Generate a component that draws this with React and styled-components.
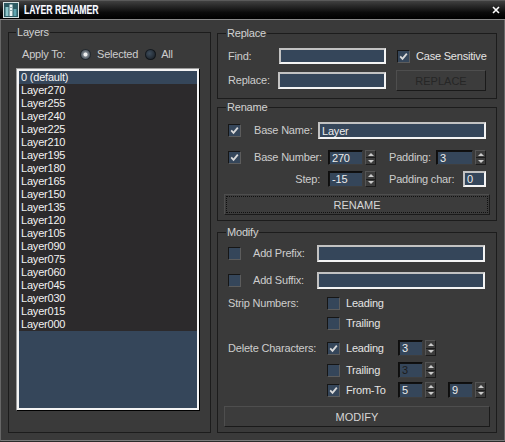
import React from "react"
import styled, { createGlobalStyle } from "styled-components"

const GlobalStyle = createGlobalStyle`
  html, body {
    margin: 0;
    padding: 0;
    background: #2b2b2b;
  }
  body {
    font-family: "Liberation Sans", Arial, sans-serif;
    font-size: 11px;
  }
`

const layers = [
  "0 (default)", "Layer270", "Layer255", "Layer240", "Layer225", "Layer210",
  "Layer195", "Layer180", "Layer165", "Layer150", "Layer135", "Layer120",
  "Layer105", "Layer090", "Layer075", "Layer060", "Layer045", "Layer030",
  "Layer015", "Layer000",
]

const Window = styled.div`
  width: 505px;
  height: 441px;
  display: flex;
  flex-direction: column;
  background: #3a3a3a;
  color: #d0d0d0;
  letter-spacing: -0.2px;
`

const TitleBar = styled.div`
  height: 20px;
  box-sizing: border-box;
  display: flex;
  align-items: center;
  padding: 0 5px 0 3px;
  background: linear-gradient(#404040, #0a0a0a 65%, #000);
  border-top: 1px solid #5a5a5a;
  border-bottom: 1px solid #8a8a8a;
`

const Title = styled.span`
  flex: 1;
  margin-left: 5px;
  color: #fff;
  font-weight: bold;
  font-size: 12px;
  letter-spacing: 0;
  display: inline-block;
  transform: scaleX(0.72);
  transform-origin: left center;
  text-shadow: 1px 0 0 rgba(90, 140, 255, 0.35);
`

const Body = styled.div`
  flex: 1;
  display: flex;
  gap: 6px;
  padding: 6px 6px 0 7px;
  box-sizing: border-box;
  border-left: 1px solid #666;
  border-right: 1px solid #666;
  border-bottom: 1px solid #7c7c7c;
`

const Group = styled.fieldset`
  margin: ${p => p.$mt || 0}px 0 0;
  padding: 0 ${p => p.$pr}px 0 ${p => p.$pl}px;
  width: ${p => p.$w}px;
  height: ${p => p.$h}px;
  box-sizing: border-box;
  border: 1px solid #1c1c1c;
  min-width: 0;
`

const Legend = styled.legend`
  padding: 0 1px;
  margin-left: ${p => p.$ml || 0}px;
  line-height: 13px;
  color: #d2d2d2;
`

const RightColumn = styled.div`
  width: 280px;
  padding-top: 1px;
  display: flex;
  flex-direction: column;
`

const ApplyRow = styled.div`
  display: flex;
  align-items: center;
  height: 14px;
  margin-top: 8px;
  padding-left: 6px;
`

const Label = styled.span`
  flex: none;
  width: ${p => (p.$w ? `${p.$w}px` : "auto")};
  margin-left: ${p => p.$ml || 0}px;
  padding-right: ${p => p.$pr || 0}px;
  box-sizing: border-box;
  text-align: ${p => p.$align || "left"};
  line-height: 13px;
  white-space: nowrap;
  color: ${p => (p.$bright ? "#e4e4e4" : "#cdcdcd")};
`

const Radio = styled.span`
  flex: none;
  width: 11px;
  height: 11px;
  border-radius: 50%;
  margin: 0 ${p => p.$mr}px 0 ${p => p.$ml || 0}px;
  background: ${p =>
    p.$on
      ? "radial-gradient(circle, #f0f0f0 0 1.6px, #7c848c 2.4px, #3c4650 5.5px)"
      : "radial-gradient(circle at 40% 40%, #3e4d5c, #222a33 5.5px)"};
  box-shadow: inset 0 0 0 1px rgba(0, 0, 0, 0.5);
`

const ListFrame = styled.div`
  width: 184px;
  height: 343px;
  margin-top: 7px;
  box-sizing: border-box;
  border: 1px solid;
  border-color: #9c9c9c #000 #000 #9c9c9c;
`

const ListInner = styled.div`
  height: 100%;
  box-sizing: border-box;
  border: 2px solid #f4f4f4;
  background: #35465a;
`

const ListItem = styled.div`
  height: 13px;
  line-height: 13px;
  padding-left: 2px;
  color: #f2f2f2;
  background: ${p => (p.$selected ? "#35465a" : "#2c2a2c")};
`

const ReplaceGrid = styled.div`
  display: grid;
  grid-template-columns: 41px 107px 90px;
  grid-template-rows: 16px 21px;
  column-gap: 10px;
  row-gap: 6px;
  align-items: center;
  margin-top: 8px;
`

const TextField = styled.input`
  width: ${p => p.$w}px;
  height: ${p => p.$h || 17}px;
  box-sizing: border-box;
  margin: 0 0 0 ${p => p.$ml || 0}px;
  padding: 0 2px;
  border: 2px solid;
  border-color: #c2c2c2 #f4f4f4 #f4f4f4 #c2c2c2;
  background: #35465a;
  color: #ececec;
  font: inherit;
  letter-spacing: -0.2px;
  outline: none;
`

const CheckCell = styled.label`
  display: flex;
  align-items: center;
  gap: 6px;
  margin-left: 1px;
`

const Box = styled.span`
  flex: none;
  width: 13px;
  height: 13px;
  box-sizing: border-box;
  display: flex;
  align-items: center;
  justify-content: center;
  border: 1px solid;
  border-color: #161616 #5c5c5c #5c5c5c #161616;
  background: #35465a;
`

const Check = ({ on }) => (
  <Box>
    {on && (
      <svg width="9" height="9" viewBox="0 0 9 9">
        <path d="M1.2 4.4 L3.5 6.8 L7.8 1.6" fill="none" stroke="#dadada" strokeWidth="1.8" />
      </svg>
    )}
  </Box>
)

const Button = styled.button`
  height: 21px;
  width: ${p => (p.$wide ? "calc(100% + 8px)" : "auto")};
  margin: ${p => p.$mt || 0}px ${p => (p.$wide ? -4 : 0)}px 0;
  padding: 0;
  box-sizing: border-box;
  border: 1px solid;
  border-color: #4e4e4e #1a1a1a #1a1a1a #4e4e4e;
  background: #3c3c3c;
  color: ${p => (p.disabled ? "#262626" : "#d6d6d6")};
  font: inherit;
  letter-spacing: 0;
  outline: ${p => (p.$focused ? "1px dotted #101010" : "none")};
  outline-offset: -3px;
`

const Row = styled.div`
  display: flex;
  align-items: center;
  height: ${p => p.$h}px;
  margin-top: ${p => p.$mt}px;
`

const SpinWrap = styled.div`
  flex: none;
  display: flex;
  gap: 2px;
  height: ${p => p.$h || 15}px;
  margin-left: ${p => p.$ml || 0}px;
`

const SpinField = styled.div`
  width: ${p => p.$w}px;
  box-sizing: border-box;
  padding-left: 3px;
  border: 1px solid;
  border-color: #0e0e0e #3e3e3e #3e3e3e #0e0e0e;
  box-shadow: inset 1px 1px 0 #111;
  background: #35465a;
  color: ${p => (p.$disabled ? "#1c1c1c" : "#ececec")};
  display: flex;
  align-items: center;
`

const ArrowBox = styled.div`
  width: 11px;
  box-sizing: border-box;
  display: flex;
  flex-direction: column;
  border: 1px solid;
  border-color: #555 #1c1c1c #1c1c1c #555;
  background: #3c3c3c;
`

const ArrowHalf = styled.div`
  flex: 1;
  display: flex;
  align-items: center;
  justify-content: center;
  & + & {
    border-top: 1px solid #1c1c1c;
  }
`

const Tri = styled.span`
  width: 0;
  height: 0;
  border-left: 3px solid transparent;
  border-right: 3px solid transparent;
  ${p => (p.$up ? "border-bottom" : "border-top")}: 3px solid #cacaca;
`

const Spinner = ({ value, w, h, ml, disabled }) => (
  <SpinWrap $h={h} $ml={ml}>
    <SpinField $w={w} $disabled={disabled}>{value}</SpinField>
    <ArrowBox>
      <ArrowHalf><Tri $up /></ArrowHalf>
      <ArrowHalf><Tri /></ArrowHalf>
    </ArrowBox>
  </SpinWrap>
)

const CloseButton = () => (
  <svg width="8" height="8" viewBox="0 0 8 8">
    <path d="M1 1 L7 7 M7 1 L1 7" stroke="#fff" strokeWidth="1.6" />
  </svg>
)

const AppIcon = () => (
  <svg width="16" height="16" viewBox="0 0 16 16">
    <rect x="0.5" y="0.5" width="15" height="15" fill="#2c5a62" stroke="#d6e2e2" />
    <rect x="2.5" y="5" width="3" height="9" fill="#8cc6ca" />
    <rect x="6.5" y="2.5" width="3" height="11.5" fill="#e8f4f4" />
    <rect x="10.5" y="7" width="3" height="7" fill="#5fa4ae" />
    <rect x="7.5" y="5" width="1" height="1" fill="#2c5a62" />
    <rect x="7.5" y="8" width="1" height="1" fill="#2c5a62" />
  </svg>
)

export default function App() {
  return (
    <>
      <GlobalStyle />
      <Window>
        <TitleBar>
          <AppIcon />
          <Title>LAYER RENAMER</Title>
          <CloseButton />
        </TitleBar>
        <Body>
          <Group $w={203} $h={407} $pl={7} $pr={7}>
            <Legend>Layers</Legend>
            <ApplyRow>
              <Label $w={58}>Apply To:</Label>
              <Radio $on $mr={6} />
              <Label>Selected</Label>
              <Radio $ml={7} $mr={5} />
              <Label>All</Label>
            </ApplyRow>
            <ListFrame>
              <ListInner>
                {layers.map((name, i) => (
                  <ListItem key={name} $selected={i === 0}>{name}</ListItem>
                ))}
              </ListInner>
            </ListFrame>
          </Group>

          <RightColumn>
            <Group $w={280} $h={72} $pl={10} $pr={10}>
              <Legend $ml={-2}>Replace</Legend>
              <ReplaceGrid>
                <Label>Find:</Label>
                <TextField $w={107} $h={16} readOnly defaultValue="" />
                <CheckCell>
                  <Check on />
                  <Label $bright>Case Sensitive</Label>
                </CheckCell>
                <Label>Replace:</Label>
                <TextField $w={108} $h={17} $ml={-1} readOnly defaultValue="" />
                <Button disabled>REPLACE</Button>
              </ReplaceGrid>
            </Group>

            <Group $w={280} $h={120} $mt={2} $pl={10} $pr={10}>
              <Legend $ml={-2}>Rename</Legend>
              <Row $h={17} $mt={8}>
                <Check on />
                <Label $ml={13} $w={64}>Base Name:</Label>
                <TextField $w={168} readOnly defaultValue="Layer" />
              </Row>
              <Row $h={15} $mt={11}>
                <Check on />
                <Label $ml={13} $w={74}>Base Number:</Label>
                <Spinner value="270" w={35} />
                <Label $ml={13} $w={47}>Padding:</Label>
                <Spinner value="3" w={37} />
              </Row>
              <Row $h={16} $mt={6}>
                <Label $w={100} $align="right" $pr={8}>Step:</Label>
                <Spinner value="-15" w={35} h={16} />
                <Label $ml={13} $w={74}>Padding char:</Label>
                <TextField $w={23} $h={16} readOnly defaultValue="0" />
              </Row>
              <Button $wide $focused $mt={7}>RENAME</Button>
            </Group>

            <Group $w={280} $h={207} $mt={5} $pl={10} $pr={10}>
              <Legend $ml={-2}>Modify</Legend>
              <Row $h={17} $mt={6}>
                <Check />
                <Label $ml={12} $w={64}>Add Prefix:</Label>
                <TextField $w={168} readOnly defaultValue="" />
              </Row>
              <Row $h={17} $mt={10}>
                <Check />
                <Label $ml={12} $w={64}>Add Suffix:</Label>
                <TextField $w={168} readOnly defaultValue="" />
              </Row>
              <Row $h={13} $mt={8}>
                <Label $w={99}>Strip Numbers:</Label>
                <Check />
                <Label $ml={6} $bright>Leading</Label>
              </Row>
              <Row $h={13} $mt={7}>
                <Label $w={99} />
                <Check />
                <Label $ml={6} $bright>Trailing</Label>
              </Row>
              <Row $h={16} $mt={10}>
                <Label $w={99}>Delete Characters:</Label>
                <Check on />
                <Label $ml={6} $w={52} $bright>Leading</Label>
                <Spinner value="3" w={25} h={16} />
              </Row>
              <Row $h={16} $mt={6}>
                <Label $w={99} />
                <Check />
                <Label $ml={6} $w={52} $bright>Trailing</Label>
                <Spinner value="3" w={25} h={16} disabled />
              </Row>
              <Row $h={16} $mt={4}>
                <Label $w={99} />
                <Check on />
                <Label $ml={6} $w={52} $bright>From-To</Label>
                <Spinner value="5" w={25} h={16} />
                <Spinner value="9" w={25} h={16} ml={12} />
              </Row>
              <Button $wide $mt={8}>MODIFY</Button>
            </Group>
          </RightColumn>
        </Body>
      </Window>
    </>
  )
}
